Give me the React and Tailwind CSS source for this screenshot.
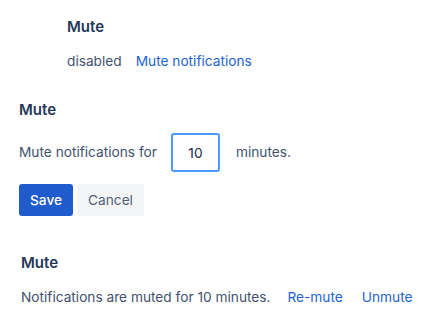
export default function App() {
  return (
    <div className="w-[432px] h-[320px] bg-white text-[13.7px] text-[#42526e] font-['Inter',sans-serif] overflow-hidden">
      {/* Disabled state */}
      <div className="pl-[67px] pt-[17px]">
        <h3 className="text-[15px] font-semibold text-[#253858] leading-[20px]">Mute</h3>
        <div className="flex items-center gap-[14px] mt-[14px] leading-[20px]">
          <span>disabled</span>
          <a className="text-[#1d63d4] cursor-pointer">Mute notifications</a>
        </div>
      </div>

      {/* Edit state */}
      <div className="pl-[19px] pt-[29px]">
        <h3 className="text-[15px] font-semibold text-[#253858] leading-[20px]">Mute</h3>
        <div className="flex items-center mt-[13px]">
          <span>Mute notifications for</span>
          <input
            defaultValue="10"
            className="ml-[14px] w-[49px] h-[39px] border-2 border-[#4c9aff] rounded-[3px] text-center text-[#172b4d] outline-none"
          />
          <span className="ml-[16px]">minutes.</span>
        </div>
        <div className="flex gap-[4px] mt-[12px]">
          <button className="h-[32px] px-[11px] rounded-[3px] bg-[#1f5bcc] text-white font-medium">Save</button>
          <button className="h-[32px] px-[11px] rounded-[3px] bg-[#f4f5f7] text-[#505f79]">Cancel</button>
        </div>
      </div>

      {/* Muted state */}
      <div className="pl-[21px] pt-[37px]">
        <h3 className="text-[15px] font-semibold text-[#253858] leading-[20px]">Mute</h3>
        <div className="flex items-center mt-[14px] leading-[20px]">
          <span>Notifications are muted for 10 minutes.</span>
          <a className="ml-[17px] text-[#1d63d4] cursor-pointer">Re-mute</a>
          <a className="ml-[19px] text-[#1d63d4] cursor-pointer">Unmute</a>
        </div>
      </div>
    </div>
  );
}
